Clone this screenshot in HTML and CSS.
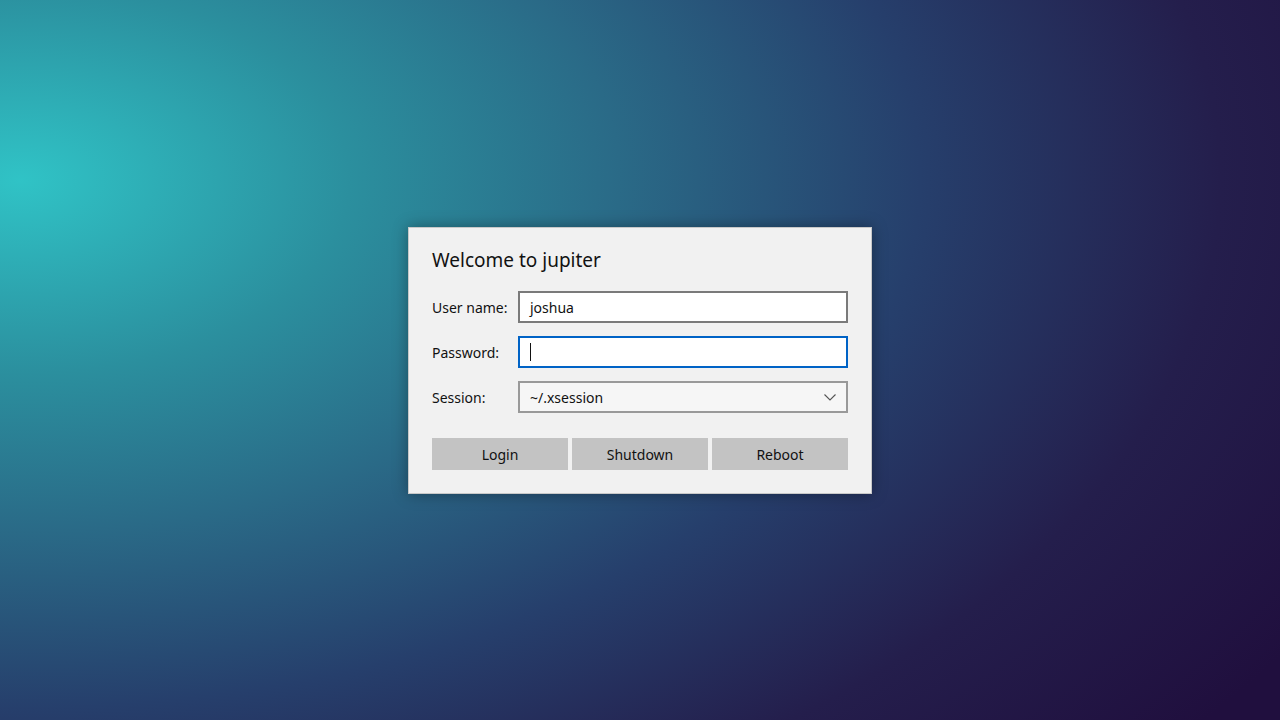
FILE: index.html
```html
<!DOCTYPE html>
<html>
<head>
<meta charset="utf-8">
<link rel="stylesheet" href="styles.css">
</head>
<body>
<div class="screen">
  <form class="dialog">
    <h1 class="title">Welcome to jupiter</h1>
    <div class="rows">
      <label class="row">
        <span class="label">User name:</span>
        <span class="field">joshua</span>
      </label>
      <label class="row">
        <span class="label">Password:</span>
        <span class="field focused"><span class="caret"></span></span>
      </label>
      <label class="row">
        <span class="label">Session:</span>
        <span class="field select">~/.xsession
          <svg class="chevron" width="12" height="7" viewBox="0 0 12 7"><path d="M0.5 0.5 L6 6 L11.5 0.5" fill="none" stroke="#555" stroke-width="1.1"/></svg>
        </span>
      </label>
    </div>
    <div class="buttons">
      <span class="btn">Login</span>
      <span class="btn">Shutdown</span>
      <span class="btn">Reboot</span>
    </div>
  </form>
</div>
</body>
</html>
```
FILE: styles.css
```css
html, body {
  margin: 0;
  padding: 0;
  width: 1280px;
  height: 720px;
  overflow: hidden;
}
.screen {
  width: 1280px;
  height: 720px;
  display: flex;
  align-items: center;
  justify-content: center;
  background: radial-gradient(ellipse 1500px 880px at 20px 180px,
    #30c3c6 0%, #2b8f9e 22%, #2a6a87 40%, #263f6c 60%, #241e4c 80%, #200f3e 100%);
  background-color: #200f3e;
  font-family: "Noto Sans", "Open Sans", sans-serif;
  color: #111;
}
.dialog {
  box-sizing: border-box;
  width: 464px;
  height: 267px;
  margin-top: 1px;
  background: #f1f1f1;
  border: 1px solid #c8c8c8;
  box-shadow: 0 0 14px rgba(0, 0, 0, 0.35);
  padding: 20px 23px 23px;
  display: flex;
  flex-direction: column;
}
.title {
  margin: 0;
  font-size: 19px;
  font-weight: 400;
  line-height: 24px;
  color: #111;
}
.rows {
  margin-top: 19px;
  display: flex;
  flex-direction: column;
  gap: 13px;
}
.row {
  display: flex;
  align-items: center;
  height: 32px;
}
.label {
  width: 86px;
  font-size: 14px;
  flex: none;
}
.field {
  box-sizing: border-box;
  width: 330px;
  height: 32px;
  border: 2px solid #7a7a7a;
  background: #fff;
  display: flex;
  align-items: center;
  padding-left: 10px;
  font-size: 14px;
  position: relative;
}
.field.focused {
  border-color: #0063c6;
}
.caret {
  width: 1px;
  height: 18px;
  background: #111;
}
.field.select {
  border-color: #999;
  background: #f6f6f6;
  justify-content: space-between;
  padding-right: 10px;
}
.buttons {
  margin-top: 25px;
  display: flex;
  gap: 4px;
}
.btn {
  width: 136px;
  height: 32px;
  background: #c3c3c3;
  display: flex;
  align-items: center;
  justify-content: center;
  font-size: 14px;
}
```
